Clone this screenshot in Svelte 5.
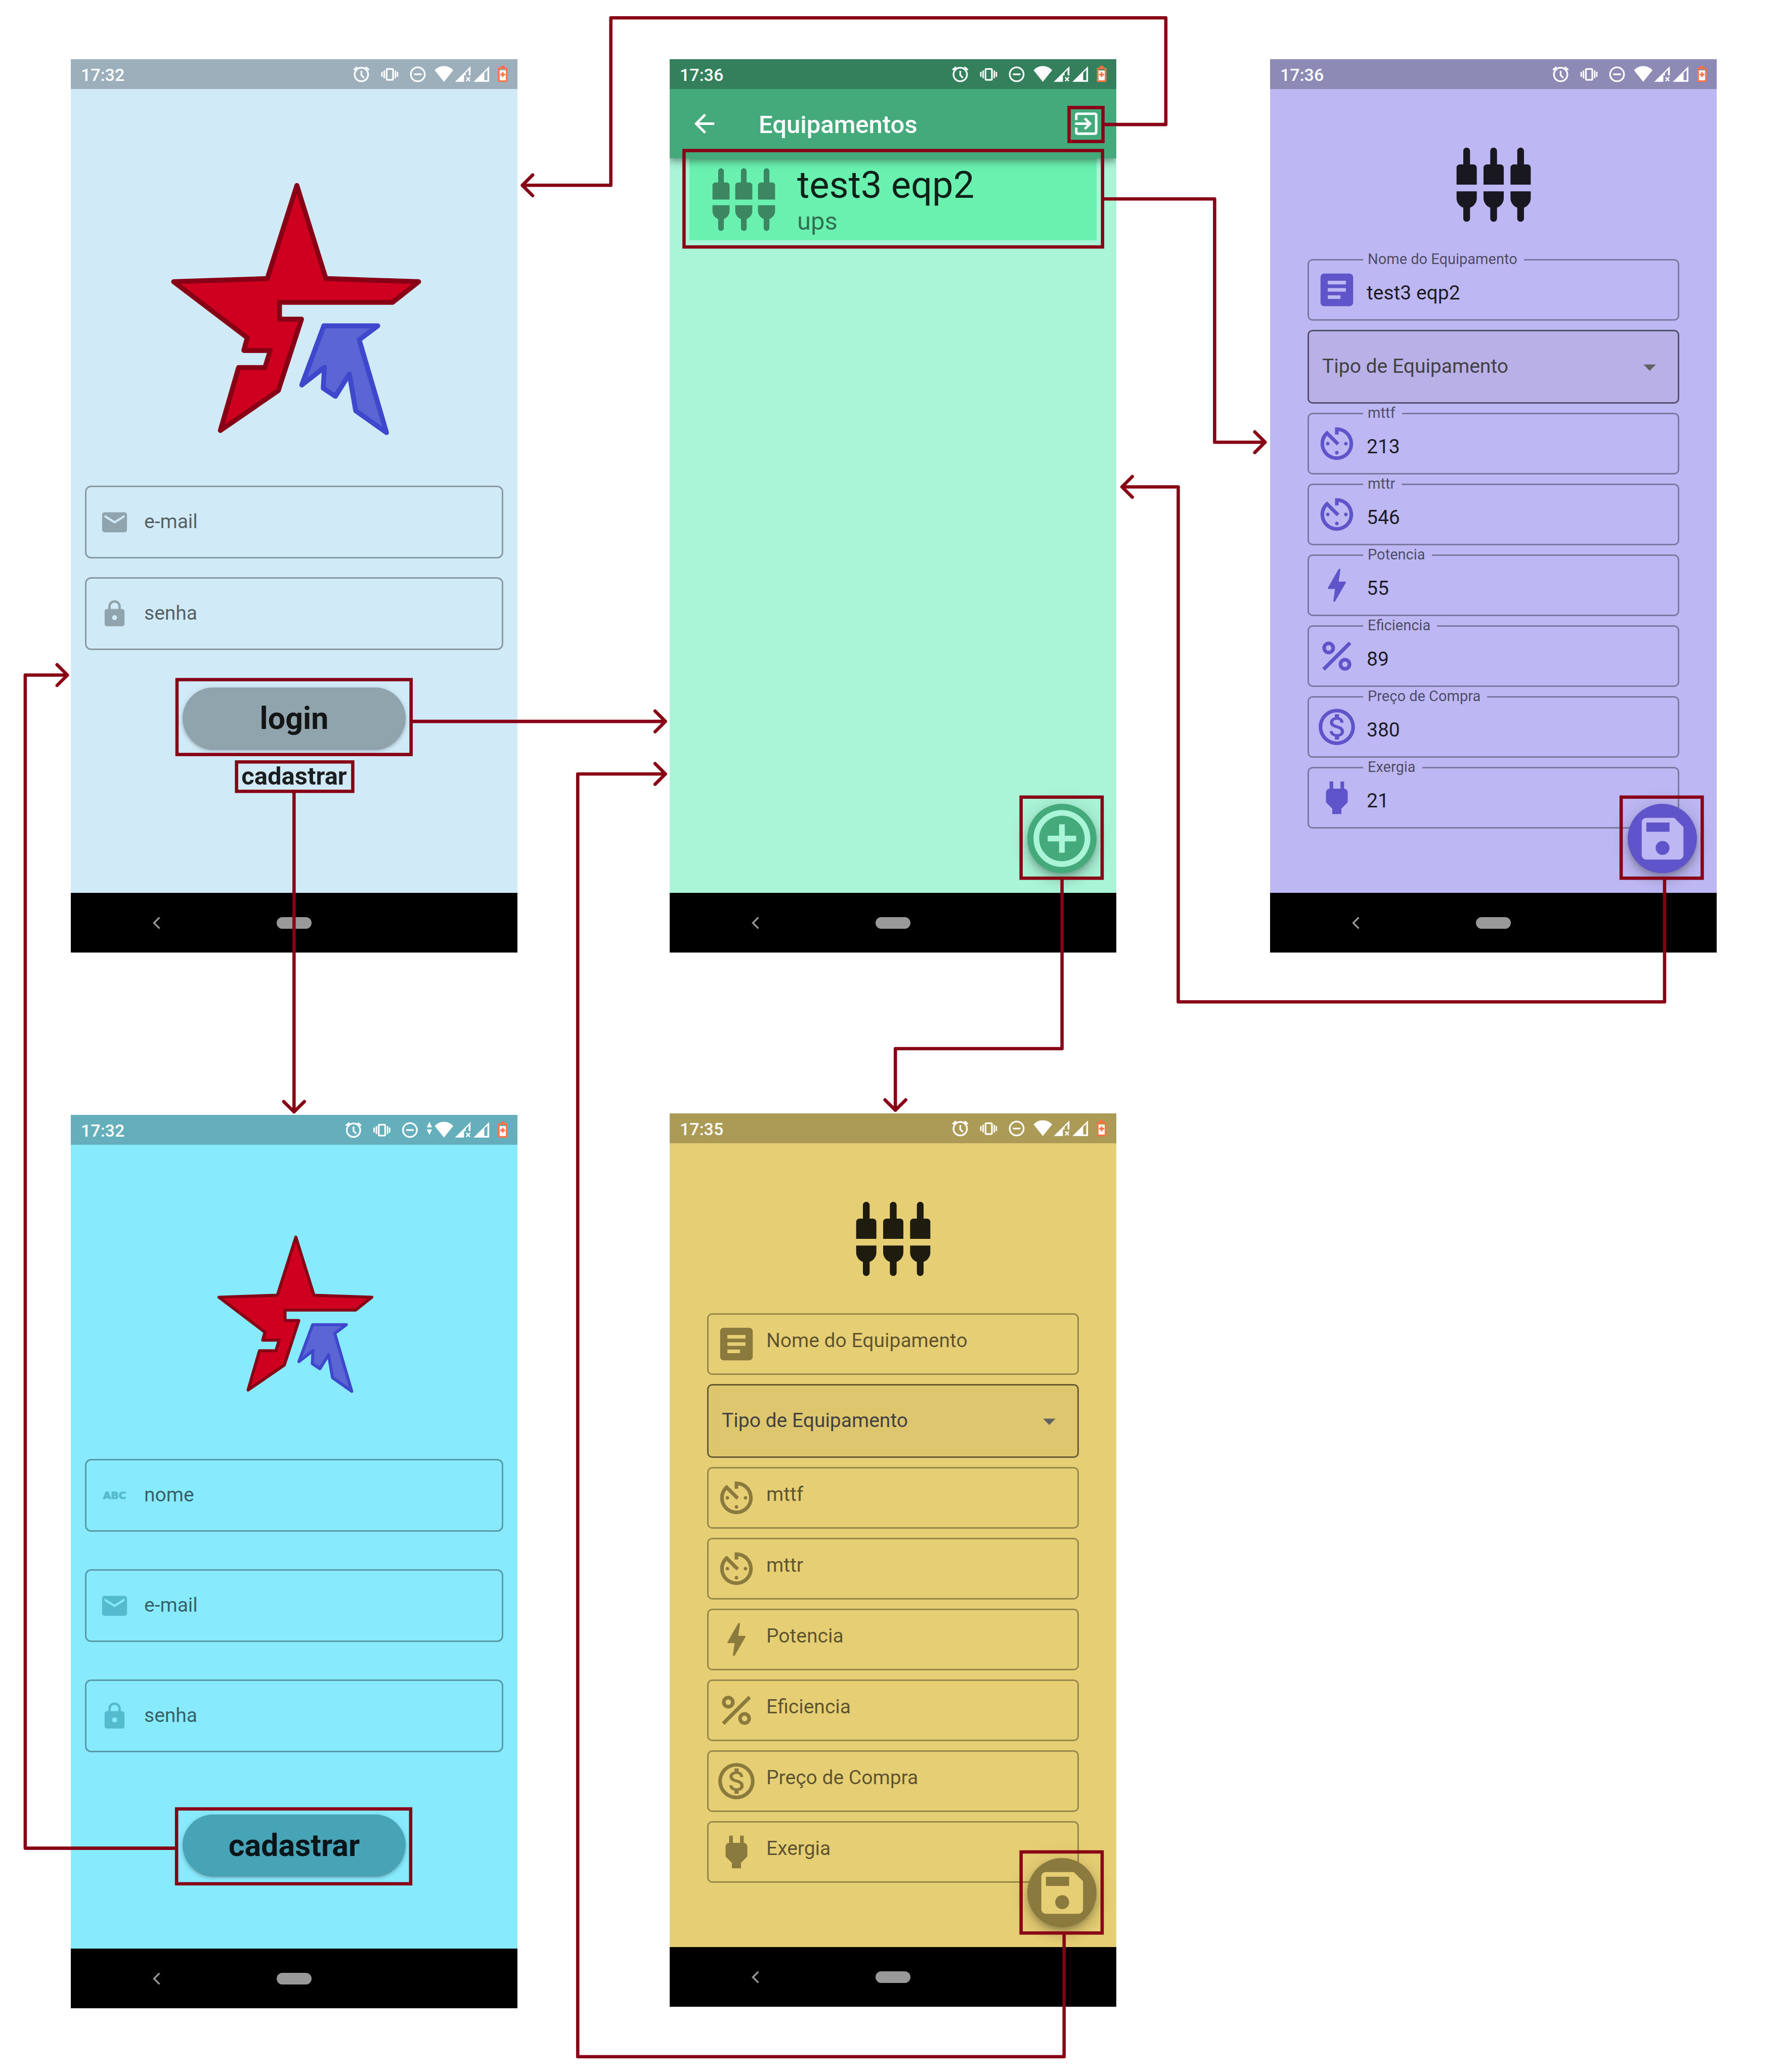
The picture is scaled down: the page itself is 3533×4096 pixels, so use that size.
<script>
  const ICONS = {
    mail: 'M20 4H4c-1.1 0-1.99.9-1.99 2L2 18c0 1.1.9 2 2 2h16c1.1 0 2-.9 2-2V6c0-1.1-.9-2-2-2zm0 4l-8 5-8-5V6l8 5 8-5v2z',
    lock: 'M18 8h-1V6c0-2.76-2.24-5-5-5S7 3.24 7 6v2H6c-1.1 0-2 .9-2 2v10c0 1.1.9 2 2 2h12c1.1 0 2-.9 2-2V10c0-1.1-.9-2-2-2zm-6 9c-1.1 0-2-.9-2-2s.9-2 2-2 2 .9 2 2-.9 2-2 2zm3.1-9H8.9V6c0-1.71 1.39-3.1 3.1-3.1 1.71 0 3.1 1.39 3.1 3.1v2z',
    back: 'M20 11H7.83l5.59-5.59L12 4l-8 8 8 8 1.41-1.41L7.83 13H20v-2z',
    exit: 'M10.09 15.59L11.5 17l5-5-5-5-1.41 1.41L12.67 11H3v2h9.67l-2.58 2.59zM19 3H5c-1.11 0-2 .9-2 2v4h2V5h14v14H5v-4H3v4c0 1.1.89 2 2 2h14c1.1 0 2-.9 2-2V5c0-1.1-.9-2-2-2z',
    add: 'M13 7h-2v4H7v2h4v4h2v-4h4v-2h-4V7zm-1-5C6.48 2 2 6.48 2 12s4.48 10 10 10 10-4.48 10-10S17.52 2 12 2zm0 18c-4.41 0-8-3.59-8-8s3.59-8 8-8 8 3.59 8 8-3.59 8-8 8z',
    save: 'M17 3H5c-1.11 0-2 .9-2 2v14c0 1.1.89 2 2 2h14c1.1 0 2-.9 2-2V7l-4-4zm-5 16c-1.66 0-3-1.34-3-3s1.34-3 3-3 3 1.34 3 3-1.34 3-3 3zm3-10H5V5h10v4z',
    article: 'M19 3H5c-1.1 0-2 .9-2 2v14c0 1.1.9 2 2 2h14c1.1 0 2-.9 2-2V5c0-1.1-.9-2-2-2zm-5 14H7v-2h7v2zm3-4H7v-2h10v2zm0-4H7V7h10v2z',
    timer: 'M11 17c0 .55.45 1 1 1s1-.45 1-1-.45-1-1-1-1 .45-1 1zm0-14v4h2V5.08c3.39.49 6 3.39 6 6.92 0 3.87-3.13 7-7 7s-7-3.13-7-7c0-1.68.59-3.22 1.58-4.42L12 13l1.41-1.41-6.8-6.8v.02C4.42 6.45 3 9.05 3 12c0 4.97 4.02 9 9 9 4.97 0 9-4.03 9-9s-4.03-9-9-9h-1zm7 9c0-.55-.45-1-1-1s-1 .45-1 1 .45 1 1 1 1-.45 1-1zM6 12c0 .55.45 1 1 1s1-.45 1-1-.45-1-1-1-1 .45-1 1z',
    bolt: 'M11 21h-1l1-7H7.5c-.88 0-.33-.75-.31-.78C8.48 10.94 10.42 7.54 13.01 3h1l-1 7h3.51c.4 0 .62.19.4.66C12.97 17.55 11 21 11 21z',
    percent: 'M7.5 4C5.57 4 4 5.57 4 7.5S5.57 11 7.5 11 11 9.43 11 7.5 9.43 4 7.5 4zm0 5C6.67 9 6 8.33 6 7.5S6.67 6 7.5 6 9 6.67 9 7.5 8.33 9 7.5 9zm9 4c-1.93 0-3.5 1.57-3.5 3.5s1.57 3.5 3.5 3.5 3.5-1.57 3.5-3.5-1.57-3.5-3.5-3.5zm0 5c-.83 0-1.5-.67-1.5-1.5s.67-1.5 1.5-1.5 1.5.67 1.5 1.5-.67 1.5-1.5 1.5zM5.41 20L4 18.59 18.59 4 20 5.41z',
    money: 'M12 2C6.48 2 2 6.48 2 12s4.48 10 10 10 10-4.48 10-10S17.52 2 12 2zm0 18c-4.41 0-8-3.59-8-8s3.59-8 8-8 8 3.59 8 8-3.59 8-8 8zm.31-8.86c-1.77-.45-2.34-.94-2.34-1.67 0-.84.79-1.43 2.1-1.43 1.38 0 1.9.66 1.94 1.64h1.71c-.05-1.34-.87-2.57-2.49-2.97V5H10.9v1.69c-1.51.32-2.72 1.3-2.72 2.81 0 1.79 1.49 2.69 3.66 3.21 1.95.46 2.34 1.15 2.34 1.87 0 .53-.39 1.39-2.1 1.39-1.6 0-2.23-.72-2.32-1.64H8.04c.1 1.7 1.36 2.66 2.86 2.97V19h2.34v-1.67c1.52-.29 2.72-1.16 2.73-2.77-.01-2.2-1.9-2.96-3.66-3.42z',
    power: 'M16.01 7L16 3h-2v4h-4V3H8v4h-.01C7 6.99 6 7.99 6 8.99v5.49L9.5 18v3h5v-3l3.5-3.51v-5.5c0-1-1-2-1.99-1.99z',
    drop: 'M7 10l5 5 5-5z',
    jacks: [0, 8, 16]
      .map(
        (x) =>
          `M${x + 5} 2c0-.55-.45-1-1-1s-1 .45-1 1v4h-1c-.55 0-1 .45-1 1v5h6V7c0-.55-.45-1-1-1h-1V2z` +
          `M${x + 1} 14v2c0 1.3.84 2.4 2 2.82V22c0 .55.45 1 1 1s1-.45 1-1v-3.18c1.16-.42 2-1.52 2-2.82v-2h-6z`
      )
      .join('')
  };

  const equipment = [
    { id: 'nome', label: 'Nome do Equipamento', icon: 'article', value: 'test3 eqp2' },
    { id: 'mttf', label: 'mttf', icon: 'timer', value: '213' },
    { id: 'mttr', label: 'mttr', icon: 'timer', value: '546' },
    { id: 'potencia', label: 'Potencia', icon: 'bolt', value: '55' },
    { id: 'eficiencia', label: 'Eficiencia', icon: 'percent', value: '89' },
    { id: 'preco', label: 'Preço de Compra', icon: 'money', value: '380' },
    { id: 'exergia', label: 'Exergia', icon: 'power', value: '21' }
  ];

  // Tap targets that start a transition: [x, y, width, height]
  const targets = [
    [428, 1643, 566, 181],
    [572, 1842, 281, 71],
    [427, 4373, 566, 181],
    [2585, 260, 82, 82],
    [1654, 364, 1012, 233],
    [2469, 1927, 196, 196],
    [3920, 1927, 196, 196],
    [2469, 4477, 196, 196]
  ];

  // Transitions between screens, each with its arrow head
  const routes = [
    'M998 1744H1609M1584 1719l25 25l-25 25',
    'M711 1917V2688M686 2663l25 25l25-25',
    'M423 4468H61V1632H163M138 1607l25 25l-25 25',
    'M2671 301H2819V43H1477V448H1263M1288 423l-25 25l25 25',
    'M2670 481H2937V1069H3059M3034 1044l25 25l-25 25',
    'M2568 2127V2535H2165V2684M2140 2659l25 25l25-25',
    'M4025 2127V2422H2849V1177H2713M2738 1152l-25 25l25 25',
    'M2573 4677V4972H1397V1871H1609M1584 1846l25 25l-25 25'
  ];
</script>

{#snippet icon(name, size)}
  <svg class="icon {size}" viewBox="0 0 24 24" aria-hidden="true"><path d={ICONS[name]} /></svg>
{/snippet}

{#snippet statusBar(time, traffic)}
  <header class="status">
    <time>{time}</time>
    <svg viewBox="656 0 424 72" aria-hidden="true">
      <g transform={traffic ? '' : 'translate(19 0)'}>
        <g class="line">
          <circle cx="684" cy="37" r="16.3" />
          <path d="M684 28v10.5l6.5 6.5M694 19l8.500 7M674 19l-8.500 7" />
          <rect x="745" y="23.500" width="15.500" height="26.500" rx="2" />
          <circle cx="820.300" cy="36.500" r="16.800" />
          <path d="M811 36.500h18.500" />
        </g>
        <path d="M732 30.500h3.500v12H732zM737.500 27h3.500v19h-3.500zM764.500 27h3.500v19h-3.500zM769.500 30.500h3.500v12h-3.500z" />
      </g>
      {#if traffic}
        <path d="M861 30h12.700L867.300 16.700zM861 35h12.700l-6.400 13.300z" />
      {/if}
      <path d="M902.500 54.500L880 26.500c6-6.500 14-10.200 22.500-10.200s16.500 3.700 22.500 10.200z" />
      <path d="M929 54.700L966.700 17v22h-4.400V25.500l-7.300 7.500v6h-4v15.700z" />
      <path class="line thin" d="M956.500 43.500l9 9.500m0-9.500l-9 9.500" />
      <path fill-rule="evenodd" d="M974 54.700L1011.700 17v37.700zM1000 33v17.700h7.500V25.500z" />
      <path class="battery" fill-rule="evenodd" d="M1040 16h9v4.500h5q2 0 2 2V53q0 2-2 2h-19q-2 0-2-2V22.500q0-2 2-2h5zM1037 24v27h15V24z" />
      <path d="M1037 27h15v24h-15z" />
      <path class="battery" d="M1042.500 31h4v4h4v4h-4v4h-4v-4h-4v-4h4z" />
    </svg>
  </header>
{/snippet}

{#snippet navBar()}
  <nav class="nav" aria-label="Sistema">
    <button class="nav-back" aria-label="Voltar">
      <svg viewBox="0 0 18 30" aria-hidden="true"><path d="M16 2L3 15l13 13" /></svg>
    </button>
    <button class="nav-home" aria-label="Início"></button>
  </nav>
{/snippet}

{#snippet logo(size)}
  <svg class="logo {size}" viewBox="345 440 881 875" role="img" aria-label="Logo">
    <path class="star" d="M795 453L895 774L1215 785L1125 856H735V914H811L731 1160L531 1298L594 1081H685L703 1022H612L624 978L370 785L693 774Z" />
    <path class="wing" d="M888 937H1074L1010 985L1104 1305L998 1230L976 1103L928 1180L886 1152L890 1080L812 1141Z" />
  </svg>
{/snippet}

{#snippet account(id, label, iconName, type)}
  <div class="account">
    {#if iconName === 'abc'}
      <span class="abc" aria-hidden="true">ABC</span>
    {:else}
      {@render icon(iconName, 'small')}
    {/if}
    <input {id} {type} placeholder={label} aria-label={label} />
  </div>
{/snippet}

{#snippet form(prefix, filled)}
  <form class="equipment">
    {@render icon('jacks', 'hero')}
    {#each equipment as field, i (field.id)}
      <div class="field" class:filled>
        {@render icon(field.icon, 'medium')}
        {#if filled}
          <label for="{prefix}-{field.id}">{field.label}</label>
          <input id="{prefix}-{field.id}" type="text" value={field.value} />
        {:else}
          <input id="{prefix}-{field.id}" type="text" placeholder={field.label} aria-label={field.label} />
        {/if}
      </div>
      {#if i === 0}
        <div class="picker">
          <select aria-label="Tipo de Equipamento">
            <option>Tipo de Equipamento</option>
          </select>
          {@render icon('drop', 'small')}
        </div>
      {/if}
    {/each}
    <button class="fab" type="button" aria-label="Salvar">{@render icon('save', 'save')}</button>
  </form>
{/snippet}

<main class="board">
  <div class="column first">
    <section class="phone sky" aria-label="Login">
      {@render statusBar('17:32', false)}
      <form class="screen login">
        {@render logo('large')}
        <div class="accounts">
          {@render account('login-email', 'e-mail', 'mail', 'email')}
          {@render account('login-senha', 'senha', 'lock', 'password')}
        </div>
        <button class="pill" type="button">login</button>
        <a class="signup" href="#cadastro">cadastrar</a>
      </form>
      {@render navBar()}
    </section>

    <section class="phone aqua" id="cadastro" aria-label="Cadastro">
      {@render statusBar('17:32', true)}
      <form class="screen register">
        {@render logo('compact')}
        <div class="accounts">
          {@render account('cad-nome', 'nome', 'abc', 'text')}
          {@render account('cad-email', 'e-mail', 'mail', 'email')}
          {@render account('cad-senha', 'senha', 'lock', 'password')}
        </div>
        <button class="pill" type="button">cadastrar</button>
      </form>
      {@render navBar()}
    </section>
  </div>

  <div class="column second">
    <section class="phone green" aria-label="Equipamentos">
      {@render statusBar('17:36', false)}
      <div class="appbar">
        <button aria-label="Voltar">{@render icon('back', 'small')}</button>
        <h1>Equipamentos</h1>
        <button aria-label="Sair">{@render icon('exit', 'small')}</button>
      </div>
      <div class="screen list">
        <a class="tile" href="#equipamento">
          {@render icon('jacks', 'large')}
          <span class="tile-text">
            <span class="tile-name">test3 eqp2</span>
            <span class="tile-kind">ups</span>
          </span>
        </a>
        <button class="fab" aria-label="Adicionar">{@render icon('add', 'large')}</button>
      </div>
      {@render navBar()}
    </section>

    <section class="phone sand" aria-label="Novo equipamento">
      {@render statusBar('17:35', false)}
      {@render form('novo', false)}
      {@render navBar()}
    </section>
  </div>

  <div class="column third">
    <section class="phone violet" id="equipamento" aria-label="Editar equipamento">
      {@render statusBar('17:36', false)}
      {@render form('edit', true)}
      {@render navBar()}
    </section>
  </div>

  <svg class="flow" viewBox="0 0 4321 5009" preserveAspectRatio="none" aria-hidden="true">
    {#each targets as [x, y, width, height]}
      <rect {x} {y} {width} {height} />
    {/each}
    {#each routes as d}
      <path {d} />
    {/each}
  </svg>
</main>

<style>
  :global(body) {
    background: #fff;
  }

  .board {
    position: relative;
    box-sizing: border-box;
    min-height: 100vh;
    display: grid;
    grid-template-columns: 1fr 301px 1fr 304px 1fr;
    align-items: start;
    padding: 117px 139px 126px 140px;
    font-family: Roboto, 'Liberation Sans', sans-serif;
  }

  .column {
    display: flex;
    flex-direction: column;
  }
  .first {
    grid-column: 1;
    gap: 321px;
  }
  .second {
    grid-column: 3;
    gap: 318px;
  }
  .third {
    grid-column: 5;
  }

  .flow {
    position: absolute;
    inset: 0;
    z-index: 2;
    width: 100%;
    height: 100%;
    pointer-events: none;
    fill: none;
    stroke: #880015;
    stroke-width: 8;
  }
  .flow path {
    stroke-linecap: round;
    stroke-linejoin: round;
  }

  button,
  input,
  select {
    font: inherit;
    color: inherit;
    background: none;
    border: 0;
    margin: 0;
    padding: 0;
    min-width: 0;
    outline: none;
  }

  .phone {
    aspect-ratio: 1 / 2;
    display: flex;
    flex-direction: column;
    background: var(--bg);
    color: rgba(0, 0, 0, 0.87);
    font-size: 39px;
  }
  .sky {
    --bg: #d1eaf8;
    --accent: #90a4ad;
    --mark: #90a4ad;
  }
  .aqua {
    --bg: #87eafd;
    --accent: #47a4b6;
    --mark: #53bbcd;
  }
  .green {
    --bg: #aaf4d7;
    --accent: #45aa7b;
  }
  .sand {
    --bg: #e6ce74;
    --accent: #8b7a3d;
    --picker: #dec66f;
    --hint: #424242;
  }
  .violet {
    --bg: #bdb8f3;
    --accent: #6054cb;
    --picker: #b8b0e6;
    --hint: #424242;
  }

  .icon {
    display: block;
    flex: none;
    fill: currentColor;
  }
  .small {
    width: 59px;
    height: 59px;
  }
  .medium {
    width: 86px;
    height: 86px;
    color: var(--accent);
  }
  .save {
    width: 110px;
    height: 110px;
  }
  .icon.large {
    width: 135px;
    height: 135px;
  }
  .hero {
    width: 160px;
    height: 160px;
    align-self: center;
    margin-bottom: 49px;
  }

  .status {
    flex: none;
    height: 59px;
    display: flex;
    align-items: center;
    justify-content: space-between;
    padding-left: 20px;
    background: rgba(0, 0, 0, 0.25);
    color: #fff;
  }
  .status time {
    padding-top: 2px;
    font-size: 34px;
    font-weight: 500;
  }
  .status svg {
    width: 347px;
    height: 59px;
    fill: #fff;
  }
  .status .line {
    fill: none;
    stroke: #fff;
    stroke-width: 4;
  }
  .status .thin {
    stroke-width: 3;
  }
  .status .battery {
    fill: #ff7043;
  }

  .nav {
    flex: none;
    height: 118px;
    display: grid;
    grid-template-columns: 1fr 69px 1fr;
    align-items: center;
    background: #000;
  }
  .nav-back {
    justify-self: start;
    margin-left: 162px;
  }
  .nav-back svg {
    display: block;
    width: 15px;
    height: 25px;
    fill: none;
    stroke: #999;
    stroke-width: 4;
  }
  .nav-home {
    height: 23px;
    border-radius: 12px;
    background: #999;
  }

  .screen,
  .equipment {
    position: relative;
    flex: 1;
    display: flex;
    flex-direction: column;
  }

  .login,
  .register {
    padding: 0 28px;
    align-items: center;
  }
  .login {
    padding-top: 183px;
  }
  .register {
    padding-top: 178px;
  }
  .logo {
    display: block;
    stroke-width: 17;
    stroke-linejoin: round;
  }
  .logo.large {
    width: 505px;
    height: 502px;
  }
  .logo.compact {
    width: 315px;
    height: 313px;
  }
  .star {
    fill: #cf001f;
    stroke: #880015;
  }
  .wing {
    fill: #5b66d4;
    stroke: #3f48cc;
  }

  .accounts {
    align-self: stretch;
    display: flex;
    flex-direction: column;
  }
  .login .accounts {
    gap: 37px;
    margin: 99px 0 74px;
  }
  .register .accounts {
    gap: 74px;
    margin: 130px 0 123px;
  }
  .account {
    box-sizing: border-box;
    height: 144px;
    display: flex;
    align-items: center;
    gap: 29px;
    padding: 0 26px;
    border: 3px solid rgba(0, 0, 0, 0.34);
    border-radius: 12px;
    color: var(--mark);
  }
  .account input {
    box-sizing: border-box;
    flex: 1;
    height: 100%;
    padding-bottom: 3px;
  }
  .abc {
    width: 59px;
    text-align: center;
    font: bold 20px 'DejaVu Sans', sans-serif;
    -webkit-text-stroke: 1px currentColor;
  }
  input {
    color: rgba(0, 0, 0, 0.87);
  }
  input::placeholder {
    color: rgba(0, 0, 0, 0.6);
    opacity: 1;
  }

  .pill {
    width: 441px;
    height: 121px;
    border-radius: 61px;
    background: var(--accent);
    color: rgba(0, 0, 0, 0.87);
    font-size: 61px;
    font-weight: 700;
    box-shadow:
      0 7px 2px -5px rgba(0, 0, 0, 0.2),
      0 5px 5px rgba(0, 0, 0, 0.14),
      0 2px 12px rgba(0, 0, 0, 0.12);
  }
  .signup {
    margin-top: 26px;
    color: rgba(0, 0, 0, 0.87);
    font-size: 49px;
    font-weight: 700;
    text-decoration: none;
  }

  .green .status {
    background: #34805c;
  }
  .appbar {
    position: relative;
    z-index: 1;
    flex: none;
    height: 137px;
    display: flex;
    align-items: center;
    padding: 0 30px 0 39px;
    background: var(--accent);
    color: #fff;
    box-shadow:
      0 5px 10px -2px rgba(0, 0, 0, 0.2),
      0 10px 12px rgba(0, 0, 0, 0.14),
      0 2px 24px rgba(0, 0, 0, 0.12);
    clip-path: inset(0 0 -60px 0);
  }
  .appbar h1 {
    flex: 1;
    margin: 0 0 0 78px;
    padding-top: 4px;
    font-size: 49px;
    font-weight: 500;
  }
  .list {
    padding: 0 39px;
  }
  .tile {
    height: 162px;
    display: flex;
    align-items: center;
    gap: 38px;
    padding-left: 40px;
    background: #6af1af;
    color: #3c8661;
    text-decoration: none;
  }
  .tile-text {
    display: flex;
    flex-direction: column;
  }
  .tile-name {
    color: rgba(0, 0, 0, 0.87);
    font-size: 74px;
  }
  .tile-kind {
    color: rgba(0, 0, 0, 0.54);
    font-size: 49px;
  }

  .fab {
    position: absolute;
    right: 39px;
    bottom: 39px;
    width: 137px;
    height: 137px;
    display: grid;
    place-items: center;
    border-radius: 50%;
    background: var(--accent);
    color: var(--bg);
    box-shadow:
      0 7px 12px -2px rgba(0, 0, 0, 0.2),
      0 15px 24px rgba(0, 0, 0, 0.14),
      0 2px 44px rgba(0, 0, 0, 0.12);
  }

  .equipment {
    gap: 18px;
    padding: 109px 74px 0;
  }
  .field {
    position: relative;
    box-sizing: border-box;
    height: 122px;
    display: flex;
    align-items: center;
    gap: 16px;
    padding: 0 12px;
    border: 3px solid rgba(0, 0, 0, 0.34);
    border-radius: 10px;
  }
  .field input {
    box-sizing: border-box;
    flex: 1;
    height: 100%;
    padding-bottom: 14px;
  }
  .filled input {
    padding: 12px 0 0;
  }
  .field label {
    position: absolute;
    top: -20px;
    left: 107px;
    padding: 0 13px 0 9px;
    background: var(--bg);
    color: rgba(0, 0, 0, 0.6);
    font-size: 29px;
    line-height: 34px;
  }
  .picker {
    display: grid;
    align-items: center;
    color: #616161;
  }
  .picker select,
  .picker .icon {
    grid-area: 1 / 1;
  }
  .picker .icon {
    justify-self: end;
    margin-right: 29px;
    pointer-events: none;
  }
  .picker select {
    appearance: none;
    box-sizing: border-box;
    width: 100%;
    height: 146px;
    padding: 0 26px 3px;
    border: 3px solid rgba(0, 0, 0, 0.54);
    border-radius: 10px;
    background: var(--picker);
    color: var(--hint);
  }
</style>
